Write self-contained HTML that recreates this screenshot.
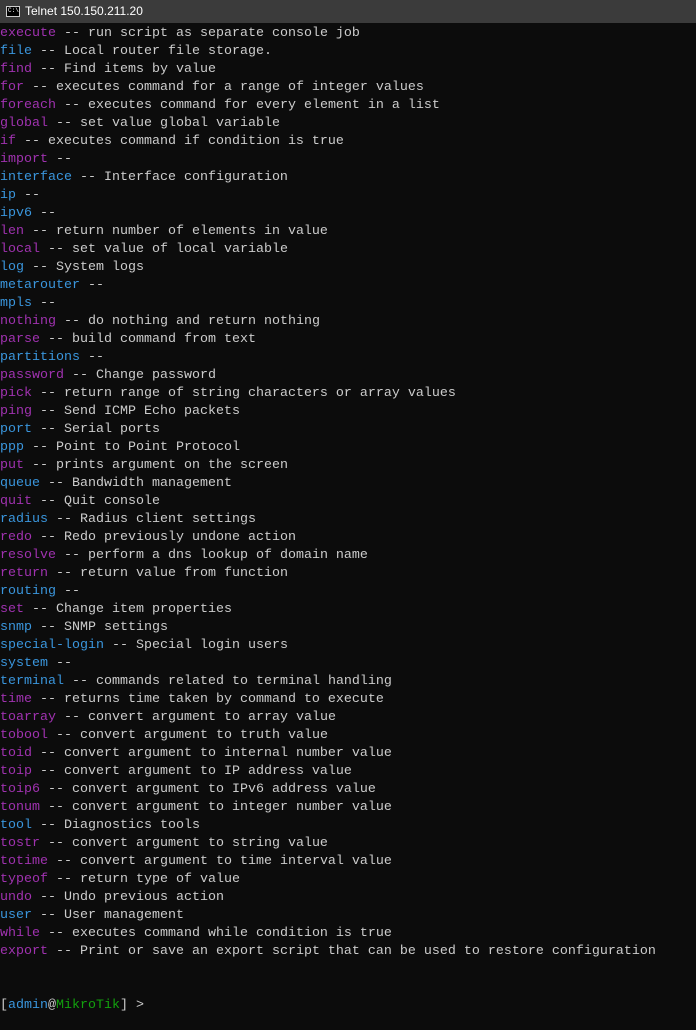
<!DOCTYPE html>
<html><head><meta charset="utf-8"><style>
html,body{margin:0;padding:0;width:696px;height:1030px;background:#0c0c0c;overflow:hidden}
.title{position:absolute;left:0;top:0;width:696px;height:23px;background:#3b3b3b;color:#fff;font:12px "Liberation Sans",sans-serif;}
.title .ic{position:absolute;left:6px;top:6px;width:14px;height:11px;background:#000;border:1px solid #ccc;box-sizing:border-box}
.title .ic:after{content:"C:\\";position:absolute;left:1px;top:0px;font:6px "Liberation Mono",monospace;color:#fff}
.title span{position:absolute;left:25px;top:4px}
pre{position:absolute;left:0;top:25px;margin:0;font:13.33px/18px "Liberation Mono",monospace;color:#cccccc;white-space:pre}
.m{color:#a032b0}.b{color:#3a96dd}.g{color:#13a10e}
</style></head><body>
<div class="title"><div class="ic"></div><span>Telnet 150.150.211.20</span></div>
<pre><span class="m">execute</span> -- run script as separate console job
<span class="b">file</span> -- Local router file storage.
<span class="m">find</span> -- Find items by value
<span class="m">for</span> -- executes command for a range of integer values
<span class="m">foreach</span> -- executes command for every element in a list
<span class="m">global</span> -- set value global variable
<span class="m">if</span> -- executes command if condition is true
<span class="m">import</span> --
<span class="b">interface</span> -- Interface configuration
<span class="b">ip</span> --
<span class="b">ipv6</span> --
<span class="m">len</span> -- return number of elements in value
<span class="m">local</span> -- set value of local variable
<span class="b">log</span> -- System logs
<span class="b">metarouter</span> --
<span class="b">mpls</span> --
<span class="m">nothing</span> -- do nothing and return nothing
<span class="m">parse</span> -- build command from text
<span class="b">partitions</span> --
<span class="m">password</span> -- Change password
<span class="m">pick</span> -- return range of string characters or array values
<span class="m">ping</span> -- Send ICMP Echo packets
<span class="b">port</span> -- Serial ports
<span class="b">ppp</span> -- Point to Point Protocol
<span class="m">put</span> -- prints argument on the screen
<span class="b">queue</span> -- Bandwidth management
<span class="m">quit</span> -- Quit console
<span class="b">radius</span> -- Radius client settings
<span class="m">redo</span> -- Redo previously undone action
<span class="m">resolve</span> -- perform a dns lookup of domain name
<span class="m">return</span> -- return value from function
<span class="b">routing</span> --
<span class="m">set</span> -- Change item properties
<span class="b">snmp</span> -- SNMP settings
<span class="b">special-login</span> -- Special login users
<span class="b">system</span> --
<span class="b">terminal</span> -- commands related to terminal handling
<span class="m">time</span> -- returns time taken by command to execute
<span class="m">toarray</span> -- convert argument to array value
<span class="m">tobool</span> -- convert argument to truth value
<span class="m">toid</span> -- convert argument to internal number value
<span class="m">toip</span> -- convert argument to IP address value
<span class="m">toip6</span> -- convert argument to IPv6 address value
<span class="m">tonum</span> -- convert argument to integer number value
<span class="b">tool</span> -- Diagnostics tools
<span class="m">tostr</span> -- convert argument to string value
<span class="m">totime</span> -- convert argument to time interval value
<span class="m">typeof</span> -- return type of value
<span class="m">undo</span> -- Undo previous action
<span class="b">user</span> -- User management
<span class="m">while</span> -- executes command while condition is true
<span class="m">export</span> -- Print or save an export script that can be used to restore configuration


[<span class="b">admin</span>@<span class="g">MikroTik</span>] &gt;</pre>
</body></html>
